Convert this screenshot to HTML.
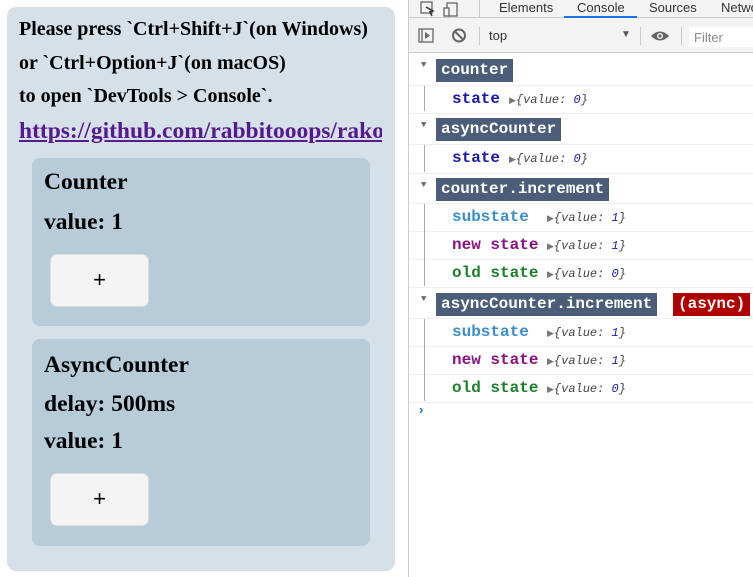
<!DOCTYPE html>
<html><head><style>
*{margin:0;padding:0;box-sizing:border-box}
body{width:753px;height:577px;background:#fff;position:relative;overflow:hidden;font-family:"Liberation Serif",serif}
.left{position:absolute;left:7px;top:7px;width:388px;height:564px;background:#d6e0e8;border-radius:9px}
.t{position:absolute;left:12px;font-weight:bold;font-size:20px;color:#000;white-space:nowrap}
.link{position:absolute;left:12px;top:111px;font-size:23.5px;font-weight:bold;color:#551a8b;text-decoration:underline;white-space:nowrap;width:363px;overflow:hidden}
.card{position:absolute;left:25px;width:338px;background:#b8cbd9;border-radius:8px}
.card .h{position:absolute;left:12px;font-size:23.5px;font-weight:bold;white-space:nowrap}
.btn{position:absolute;left:18px;width:99px;height:53px;background:#f4f4f4;border:1px solid #ddd;border-radius:7px;font-family:"Liberation Sans",sans-serif;font-size:22px;text-align:center;line-height:50px}
.dt{position:absolute;left:408px;top:0;width:345px;height:577px;border-left:1px solid #ccc;font-family:"Liberation Sans",sans-serif}
.bar1{position:absolute;left:0;top:0;width:345px;height:18px;background:#f3f3f3;border-bottom:1px solid #ccc;font-size:13px;color:#333}
.bar2{position:absolute;left:0;top:18px;width:345px;height:35px;background:#f3f3f3;border-bottom:1px solid #ccc;font-size:13px;color:#333}
.row{position:absolute;left:0;width:345px;border-bottom:1px solid #eee;font-family:"Liberation Mono",monospace;font-size:16px;font-weight:bold}
.tag{position:absolute;left:27px;background:#4b5d78;color:#fff;padding:0 5px;height:23px;line-height:23px}
.tri{position:absolute;left:12px;font-size:9px;color:#666;font-weight:normal}
.k{position:absolute;left:43px}
.v{position:absolute;font-family:"Liberation Mono",monospace;font-size:12px;font-style:italic;font-weight:normal;color:#444}
.v b{font-weight:normal;color:#1a1aa6}
.gl{position:absolute;left:15px;width:1px;background:#aaa}
</style></head><body>
<div class="left">
<div class="t" style="top:11px">Please press `Ctrl+Shift+J`(on Windows)</div>
<div class="t" style="top:45px">or `Ctrl+Option+J`(on macOS)</div>
<div class="t" style="top:78px">to open `DevTools &gt; Console`.</div>
<div class="link">https://github.com/rabbitooops/rako</div>
<div class="card" style="top:151px;height:168px">
<div class="h" style="top:11px">Counter</div>
<div class="h" style="top:51px">value: 1</div>
<div class="btn" style="top:96px">+</div>
</div>
<div class="card" style="top:332px;height:207px">
<div class="h" style="top:13px">AsyncCounter</div>
<div class="h" style="top:52px">delay: 500ms</div>
<div class="h" style="top:89px">value: 1</div>
<div class="btn" style="top:134px">+</div>
</div>
</div>
<div class="dt">
<div class="bar1">
<svg style="position:absolute;left:11px;top:1px" width="40" height="16"><rect x="1" y="1" width="11" height="11" fill="none" stroke="#666" stroke-width="1.3"/><path d="M6 6 L13 10 L10 11 L12 15" stroke="#333" fill="none" stroke-width="1.5"/><rect x="27" y="2" width="10" height="13" fill="none" stroke="#666" stroke-width="1.3"/><rect x="24" y="7" width="5" height="8" fill="#f3f3f3" stroke="#666" stroke-width="1.3"/></svg>
<div style="position:absolute;left:70px;top:0;width:1px;height:17px;background:#ccc"></div>
<span style="position:absolute;left:90px;top:0">Elements</span>
<span style="position:absolute;left:168px;top:0">Console</span>
<div style="position:absolute;left:155px;top:16px;width:73px;height:2px;background:#1a73e8"></div>
<span style="position:absolute;left:240px;top:0">Sources</span>
<span style="position:absolute;left:312px;top:0">Network</span>
</div>
<div class="bar2">
<svg style="position:absolute;left:9px;top:10px" width="70" height="16"><rect x="1" y="1" width="14" height="13" fill="none" stroke="#666" stroke-width="1.3"/><path d="M4 1V14" stroke="#666" stroke-width="1.3"/><path d="M7 4L12 7.5L7 11Z" fill="#666"/><circle cx="41" cy="7.5" r="6" fill="none" stroke="#666" stroke-width="2"/><path d="M37 3.5L45 11.5" stroke="#666" stroke-width="2"/></svg>
<div style="position:absolute;left:70px;top:9px;width:1px;height:18px;background:#ccc"></div>
<span style="position:absolute;left:80px;top:10px">top</span>
<span style="position:absolute;left:212px;top:11px;font-size:10px;color:#555">▼</span>
<div style="position:absolute;left:231px;top:9px;width:1px;height:18px;background:#ccc"></div>
<svg style="position:absolute;left:241px;top:12px" width="20" height="12"><path d="M1 6Q10 -3 19 6Q10 15 1 6Z" fill="#666"/><circle cx="10" cy="6" r="3" fill="#f3f3f3"/><circle cx="10" cy="6" r="1.6" fill="#666"/></svg>
<div style="position:absolute;left:272px;top:9px;width:1px;height:18px;background:#ccc"></div>
<div style="position:absolute;left:280px;top:9px;width:65px;height:20px;background:#fff"></div>
<span style="position:absolute;left:285px;top:12px;color:#888">Filter</span>
</div>

<div class="row" style="top:53px;height:33px"><span class="tri" style="top:7px">▼</span><span class="tag" style="top:6px">counter</span></div>
<div class="row" style="top:86px;height:28px"><span class="k" style="top:4px;color:#1a1aa6">state</span><span class="v" style="left:100px;top:7px"><span style="color:#777;font-style:normal;font-size:9px">▶</span>{value: <b>0</b>}</span></div>
<div class="gl" style="top:86px;height:25px"></div>
<div class="row" style="top:114px;height:31px"><span class="tri" style="top:6px">▼</span><span class="tag" style="top:4px">asyncCounter</span></div>
<div class="row" style="top:145px;height:29px"><span class="k" style="top:4px;color:#1a1aa6">state</span><span class="v" style="left:100px;top:7px"><span style="color:#777;font-style:normal;font-size:9px">▶</span>{value: <b>0</b>}</span></div>
<div class="gl" style="top:145px;height:27px"></div>
<div class="row" style="top:174px;height:30px"><span class="tri" style="top:6px">▼</span><span class="tag" style="top:4px">counter.increment</span></div>
<div class="row" style="top:204px;height:28px"><span class="k" style="top:4px;color:#3b8ec8">substate</span><span class="v" style="left:138px;top:7px"><span style="color:#777;font-style:normal;font-size:9px">▶</span>{value: <b>1</b>}</span></div>
<div class="row" style="top:232px;height:28px"><span class="k" style="top:4px;color:#881280">new state</span><span class="v" style="left:138px;top:7px"><span style="color:#777;font-style:normal;font-size:9px">▶</span>{value: <b>1</b>}</span></div>
<div class="row" style="top:260px;height:28px"><span class="k" style="top:4px;color:#1c7f2a">old state</span><span class="v" style="left:138px;top:7px"><span style="color:#777;font-style:normal;font-size:9px">▶</span>{value: <b>0</b>}</span></div>
<div class="gl" style="top:204px;height:82px"></div>
<div class="row" style="top:288px;height:31px"><span class="tri" style="top:6px">▼</span><span class="tag" style="top:5px">asyncCounter.increment</span><span class="tag" style="top:5px;left:264px;background:#b00000">(async)</span></div>
<div class="row" style="top:319px;height:28px"><span class="k" style="top:4px;color:#3b8ec8">substate</span><span class="v" style="left:138px;top:7px"><span style="color:#777;font-style:normal;font-size:9px">▶</span>{value: <b>1</b>}</span></div>
<div class="row" style="top:347px;height:28px"><span class="k" style="top:4px;color:#881280">new state</span><span class="v" style="left:138px;top:7px"><span style="color:#777;font-style:normal;font-size:9px">▶</span>{value: <b>1</b>}</span></div>
<div class="row" style="top:375px;height:28px"><span class="k" style="top:4px;color:#1c7f2a">old state</span><span class="v" style="left:138px;top:7px"><span style="color:#777;font-style:normal;font-size:9px">▶</span>{value: <b>0</b>}</span></div>
<div class="gl" style="top:319px;height:82px"></div>
<span style="position:absolute;left:10px;top:402px;color:#1a73e8;font-size:13px;font-weight:bold">›</span>
</div>
</body></html>
